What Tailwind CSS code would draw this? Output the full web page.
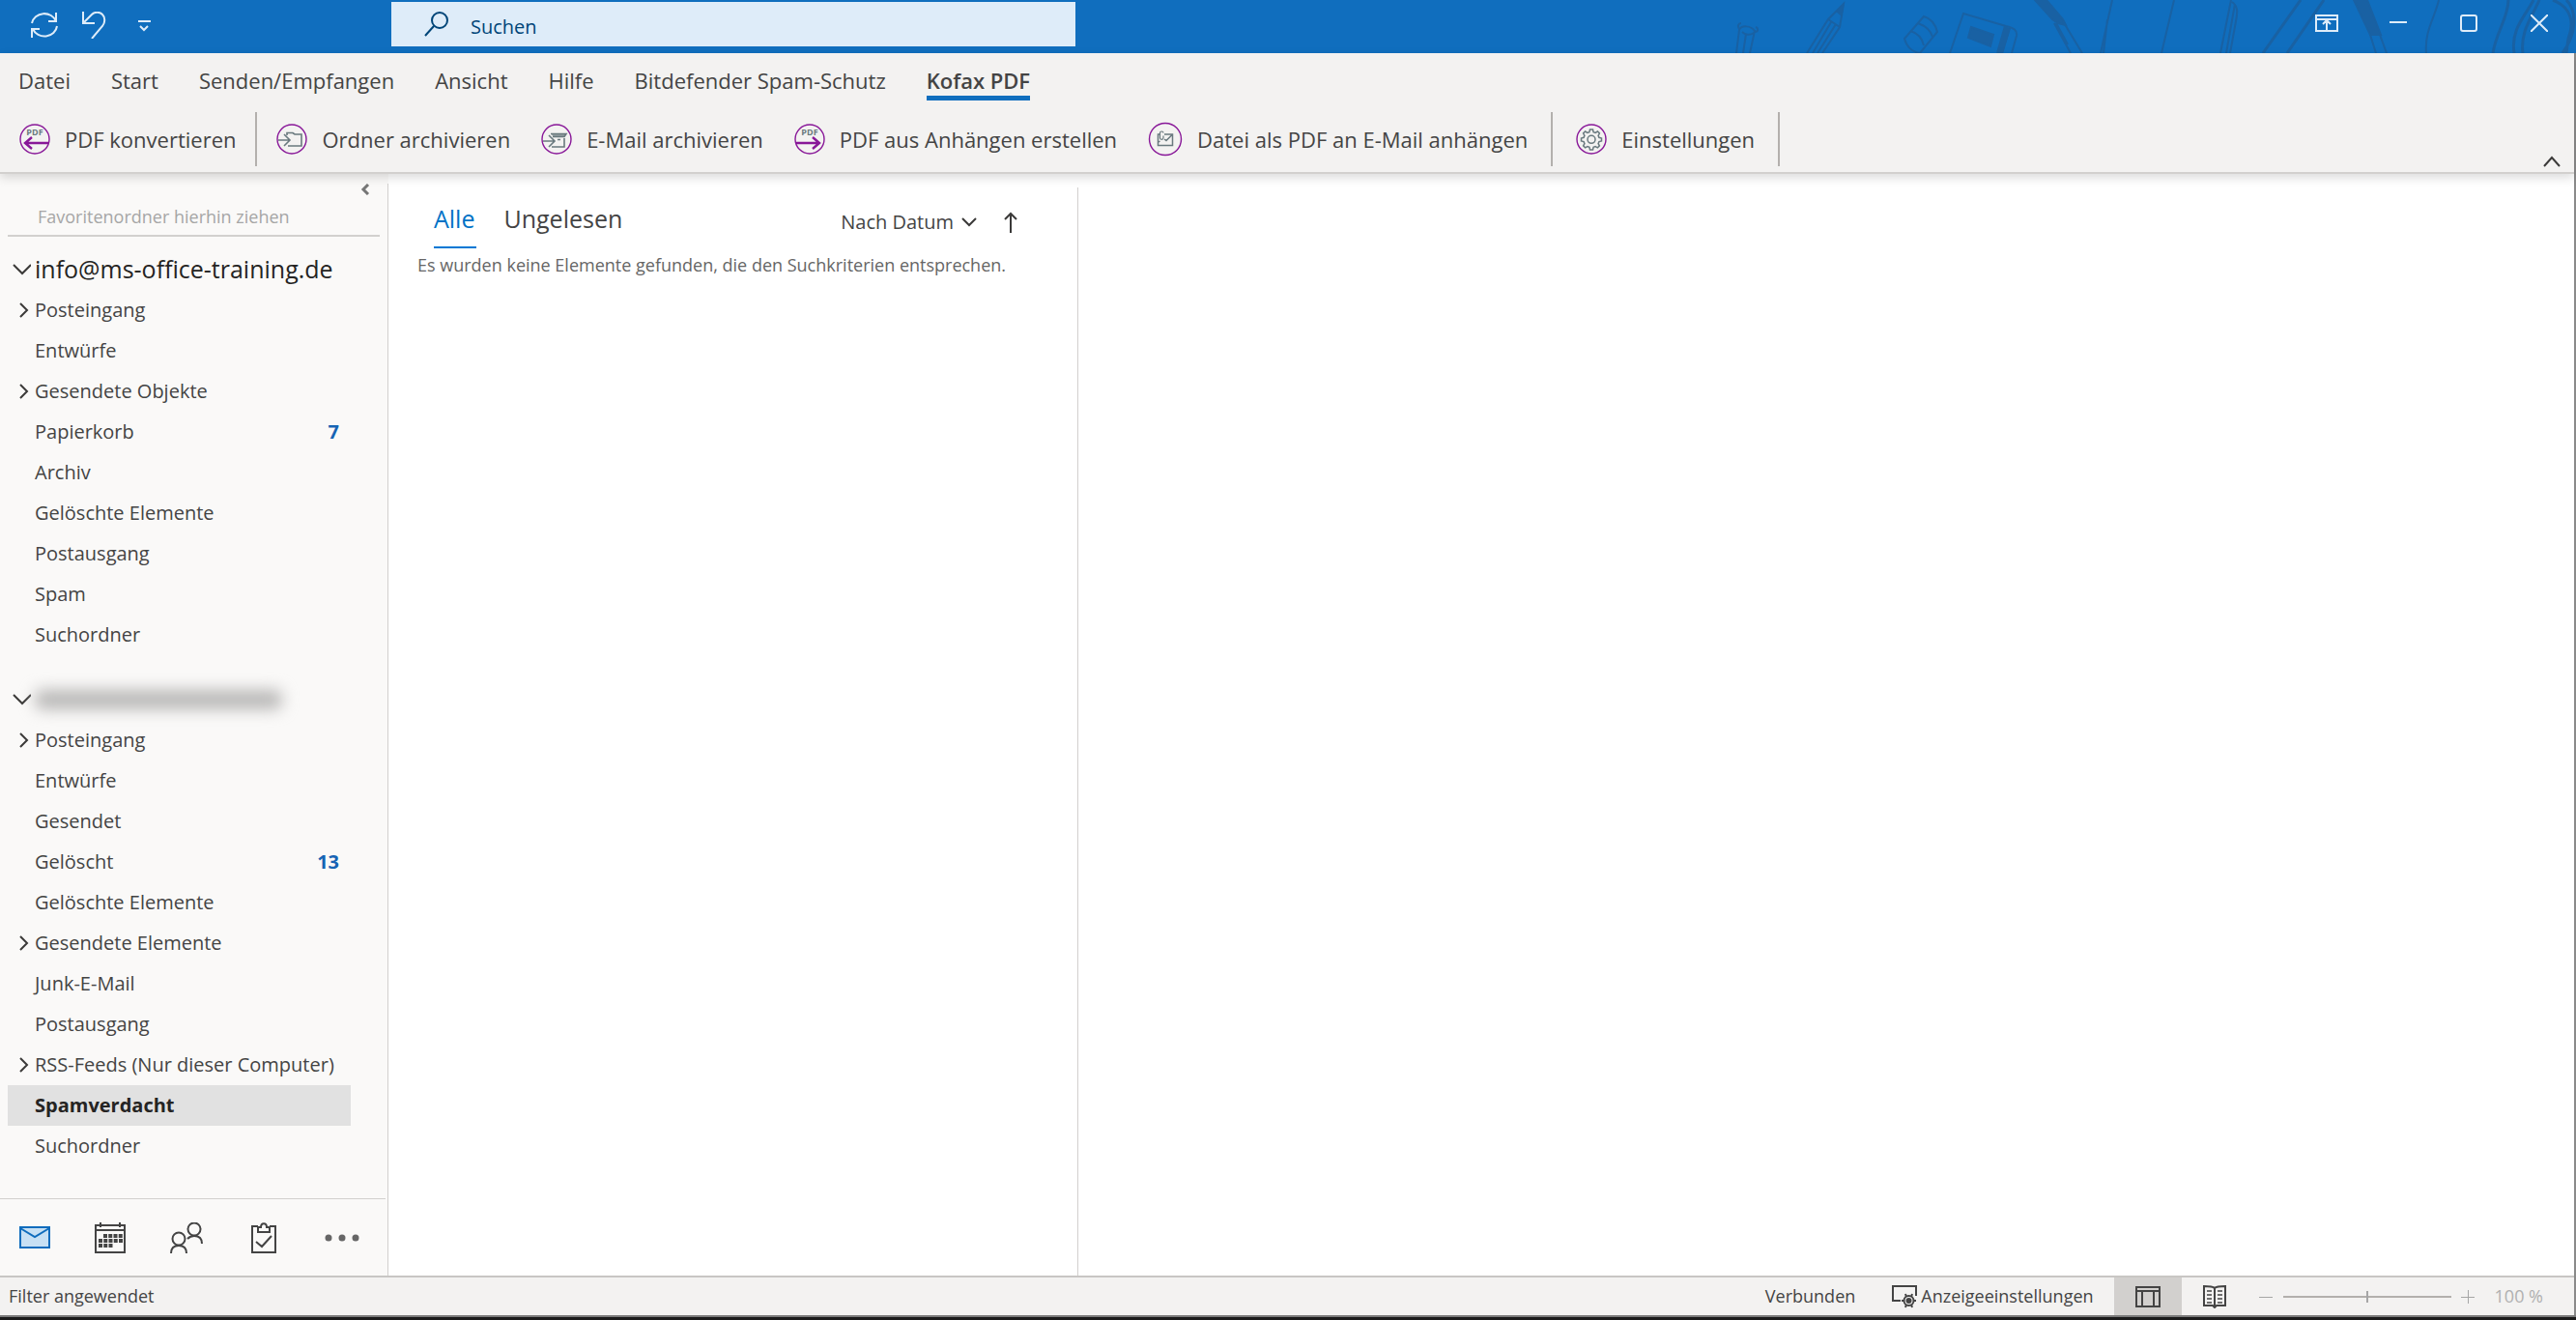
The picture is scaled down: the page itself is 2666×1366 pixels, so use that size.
<!DOCTYPE html>
<html lang="de">
<head>
  <meta charset="UTF-8">
  <meta name="viewport" content="width=device-width, initial-scale=1.0">
  <title>Spamverdacht - Outlook</title>
  <script src="https://cdn.jsdelivr.net/npm/@tailwindcss/browser@4"></script>
</head>
<body class="bg-white text-[#444] font-['Open_Sans','Noto_Sans',sans-serif] antialiased">
  <div class="min-h-screen flex flex-col">

    <!-- Title bar -->
    <header class="relative h-[55px] shrink-0 bg-[#106ebe] text-[#deecf9] flex items-start overflow-hidden">
      <svg class="absolute right-0 top-0 w-[886px] h-[55px]" viewBox="0 0 886 55" fill="none" stroke="#1961a3" stroke-width="2">
        <path d="M17 55l3-24c2-5 12-5 16 1l-5 23M24 55l3-20M20 30c-2-3-1-6 2-6M36 33c4 0 4-4 1-5M23 33c3 3 8 4 12 1"/>
        <path d="M90 55l22-35 16-16-4 24-18 27M96 55l19-32M101 55l19-30M112 20l12 8"/>
        <path d="M120 12l9-9-3 14z" fill="#1961a3" stroke="none"/>
        <path d="M191 40l20-23c7 2 12 8 14 16l-18 22c-8-1-14-7-16-15zM197 32c7 2 12 6 14 15M205 24c8 3 13 7 15 14"/>
        <path d="M238 55l14-41 44 13c8 2 12 4 11 10l-5 18M300 28l-8 27"/>
        <path d="M296 27l-8 28M299 29l-8 26" stroke-width="4"/>
        <path d="M260 28l23 8-3 12-23-9z" fill="#1961a3"/>
        <path d="M326 0h12l17 20 3 6-8-2-6-4z" fill="#1961a3"/>
        <path d="M348 24l12 22M355 22l20 33M346 24l17 31"/>
        <path d="M406 0l-12 55M401 20l-4 35M470 0l-13 55"/>
        <path d="M529 0l-11 55M533 4l-9 51M530 2c6 4 6 10 4 20l-6 33"/>
        <path d="M601 0l-39 55M625 0l-38 55" stroke-width="3"/>
        <path d="M656 0h14l14 36-11 0z" fill="#1961a3"/>
        <path d="M673 36l6 19M683 36l7 19M744 0c-4 18-15 32-13 55"/>
        <path d="M816 0c0 18-13 34-16 55M842 0c-8 16-24 30-20 55M848 0c-7 17-20 32-17 55M876 0c12 12 10 36-4 55M862 0c20 8 22 24 16 40l-2 15" stroke-width="3"/>
      </svg>

      <div class="flex items-center gap-[22px] pl-8 h-[52px] w-[405px]">
        <button aria-label="Alle Ordner senden/empfangen">
          <svg class="w-7 h-7" viewBox="0 0 28 28" fill="none" stroke="currentColor" stroke-width="2">
            <path d="M1 12a13 12 0 0 1 25-2M26 1v9h-8M27 15a13 12 0 0 1-25 3M1 27v-9h8"/>
          </svg>
        </button>
        <button aria-label="Rückgängig">
          <svg class="w-7 h-7" viewBox="0 0 28 28" fill="none" stroke="currentColor" stroke-width="2">
            <path d="M4 0v12h12M4 12L13 3c3-3 8-3 11 0s3 8 0 12L13 28"/>
          </svg>
        </button>
        <button aria-label="Symbolleiste anpassen" class="ml-[10px]">
          <svg class="w-4 h-4" viewBox="0 0 16 16" fill="none" stroke="currentColor" stroke-width="2">
            <path d="M1 4h13M3 9l4 4 4-4"/>
          </svg>
        </button>
      </div>

      <label class="relative mt-[2px] h-[46px] w-[708px] bg-[#deecf9] text-[#004578] flex items-center pl-[34px] gap-[22px]">
        <svg class="w-[26px] h-[26px] shrink-0" viewBox="0 0 26 26" fill="none" stroke="currentColor" stroke-width="2">
          <circle cx="16" cy="9" r="8"/><path d="M10 15L1 25"/>
        </svg>
        <input type="text" aria-label="Suchen" placeholder="Suchen" class="flex-1 h-full pt-1 text-[20px] bg-transparent outline-none placeholder:text-[#004578]">
      </label>

      <div class="relative ml-auto flex items-center h-12 pr-[29px] gap-[53px]">
        <button aria-label="Menüband-Anzeigeoptionen">
          <svg class="w-6 h-[18px]" viewBox="0 0 24 18" fill="none" stroke="currentColor" stroke-width="2">
            <path d="M1 1h22v16H1zM1 5h22M12 16V7M8 10l4-4 4 4"/>
          </svg>
        </button>
        <button aria-label="Minimieren">
          <svg class="w-[18px] h-[18px]" viewBox="0 0 18 18" stroke="currentColor" stroke-width="2"><path d="M0 8h18"/></svg>
        </button>
        <button aria-label="Maximieren">
          <svg class="w-[22px] h-[18px]" viewBox="0 0 22 18" fill="none" stroke="currentColor" stroke-width="2"><rect x="3" y="1" width="16" height="16" rx="2"/></svg>
        </button>
        <button aria-label="Schließen">
          <svg class="w-[18px] h-[18px]" viewBox="0 0 18 18" stroke="currentColor" stroke-width="2"><path d="M0 0l18 18M18 0L0 18"/></svg>
        </button>
      </div>
    </header>

    <div class="flex-1 flex flex-col border-r-2 border-[#8a8a8a]">
      <!-- Ribbon -->
      <div class="relative z-10 h-[125px] shrink-0 bg-[#f3f2f1] border-b-2 border-[#d2d0ce] shadow-[0_4px_10px_rgba(0,0,0,0.14)]">
        <nav class="flex items-start pl-[19px] pt-3 gap-[42px] text-[22px] leading-8">
          <button>Datei</button>
          <button>Start</button>
          <button>Senden/Empfangen</button>
          <button>Ansicht</button>
          <button>Hilfe</button>
          <button>Bitdefender Spam-Schutz</button>
          <button class="font-semibold border-b-[5px] border-[#106ebe]">Kofax PDF</button>
        </nav>

        <div class="flex items-center h-14 mt-3 pl-5 text-[22px]">
          <button class="flex items-center gap-[15px]">
            <svg class="w-8 h-8" viewBox="0 0 32 32" fill="none">
              <circle cx="16" cy="16" r="15" stroke="#881798" stroke-width="1.4"/>
              <text x="16" y="12" text-anchor="middle" font-size="9" font-weight="700" fill="#69797e">PDF</text>
              <path d="M30 20H6M13 14l-7 6 7 6" stroke="#881798" stroke-width="2.4"/>
            </svg>
            PDF konvertieren
          </button>
          <div class="w-[2px] h-14 bg-[#b3b0ad] mx-5"></div>
          <button class="flex items-center gap-[15px]">
            <svg class="w-8 h-8" viewBox="0 0 32 32" fill="none">
              <circle cx="16" cy="16" r="15" stroke="#881798" stroke-width="1.4"/>
              <path d="M2 17h11M8 11l6 6-6 6M11 12V9.500h6l2 1.500h7V23H12" stroke="#69797e" stroke-width="1.600"/>
            </svg>
            Ordner archivieren
          </button>
          <button class="flex items-center gap-[15px] ml-8">
            <svg class="w-8 h-8" viewBox="0 0 32 32" fill="none">
              <circle cx="16" cy="16" r="15" stroke="#881798" stroke-width="1.4"/>
              <path d="M2 18h11M8 12l6 6-6 6M10 10.500h16l-2 3H12M24 15v9H11M17 16.500h3" stroke="#69797e" stroke-width="1.600"/>
              <path d="M10 10h16l-2 4H13z" fill="#69797e" fill-opacity=".7"/>
            </svg>
            E-Mail archivieren
          </button>
          <button class="flex items-center gap-[15px] ml-8">
            <svg class="w-8 h-8" viewBox="0 0 32 32" fill="none">
              <circle cx="16" cy="16" r="15" stroke="#881798" stroke-width="1.4"/>
              <text x="16" y="12" text-anchor="middle" font-size="9" font-weight="700" fill="#69797e">PDF</text>
              <path d="M2 20h24M19 14l7 6-7 6" stroke="#881798" stroke-width="2.4"/>
            </svg>
            PDF aus Anhängen erstellen
          </button>
          <button class="flex items-center gap-[15px] ml-8">
            <svg class="w-9 h-9" viewBox="0 0 36 36" fill="none">
              <circle cx="18" cy="18" r="16.500" stroke="#881798" stroke-width="1.400"/>
              <path d="M12 13h-1.500v11.500h15v-11.500H17M11 21l1.500-1M17 18l2 1.500 6-6" stroke="#69797e" stroke-width="1.500"/>
              <path d="M16 11.500c0-2-3.500-2-3.500 0v5c0 2.500 3.500 2.500 3.500 0v-2" stroke="#69797e" stroke-width="1.200"/>
            </svg>
            Datei als PDF an E-Mail anhängen
          </button>
          <div class="w-[2px] h-14 bg-[#b3b0ad] mx-6"></div>
          <button class="flex items-center gap-[15px]">
            <svg class="w-8 h-8" viewBox="0 0 32 32" fill="none">
              <circle cx="16" cy="16" r="15" stroke="#881798" stroke-width="1.4"/>
              <path d="M14.500 6h3l.6 2.600 2 .8 2.300-1.400 2 2-1.300 2.300.8 2L26.500 15v3l-2.600.6-.8 2 1.300 2.300-2 2-2.300-1.300-2 .8-.6 2.600h-3l-.6-2.600-2-.8-2.300 1.300-2-2 1.300-2.300-.8-2L5.500 18v-3l2.600-.7.8-2L7.600 10l2-2 2.300 1.400 2-.8z" stroke="#69797e" stroke-width="1.500"/>
              <circle cx="16" cy="16.300" r="4" stroke="#69797e" stroke-width="1.500"/>
            </svg>
            Einstellungen
          </button>
          <div class="w-[2px] h-14 bg-[#b3b0ad] ml-6"></div>
          <button aria-label="Menüband reduzieren" class="ml-auto mr-[14px] mt-[46px]">
            <svg class="w-[18px] h-3" viewBox="0 0 18 12" fill="none" stroke="#3b3a39" stroke-width="2"><path d="M1 11l8-9 8 9"/></svg>
          </button>
        </div>
      </div>

      <div class="flex-1 flex">
        <!-- Folder pane -->
        <aside class="w-[402px] shrink-0 bg-[#faf9f8] pt-[10px] flex flex-col text-[20px]">
          <div class="flex-1 flex flex-col border-r border-[#d2d0ce]">
            <div class="h-[22px] flex items-start justify-end pr-[18px]">
              <button aria-label="Ordnerbereich minimieren">
                <svg class="w-[10px] h-3" viewBox="0 0 10 12" fill="none" stroke="#767676" stroke-width="3"><path d="M8 1L3 6l5 5"/></svg>
              </button>
            </div>
            <div class="ml-2 mr-2 pl-[31px] h-[33px] border-b-2 border-[#d2d0ce] text-[18px] leading-6 text-[#a6a6a6]">Favoritenordner hierhin ziehen</div>

            <button class="mt-[13px] h-[42px] pl-3 flex items-center gap-1 text-[25px] text-[#252423]">
              <svg class="w-5 h-3" viewBox="0 0 20 12" fill="none" stroke="#3b3a39" stroke-width="2"><path d="M2 1l9 9 9-9"/></svg>
              info@ms-office-training.de
            </button>
            <ul class="pl-2 pr-[38px]">
              <li><button class="w-full h-[42px] flex items-center"><svg class="w-7 h-4" viewBox="0 0 28 16" fill="none" stroke="#3b3a39" stroke-width="2"><path d="M13 1l7 7-7 7"/></svg>Posteingang</button></li>
              <li><button class="w-full h-[42px] flex items-center pl-7">Entwürfe</button></li>
              <li><button class="w-full h-[42px] flex items-center"><svg class="w-7 h-4" viewBox="0 0 28 16" fill="none" stroke="#3b3a39" stroke-width="2"><path d="M13 1l7 7-7 7"/></svg>Gesendete Objekte</button></li>
              <li><button class="w-full h-[42px] flex items-center pl-7 pr-3">Papierkorb <span class="ml-auto font-bold text-[#1664b4]">7</span></button></li>
              <li><button class="w-full h-[42px] flex items-center pl-7">Archiv</button></li>
              <li><button class="w-full h-[42px] flex items-center pl-7">Gelöschte Elemente</button></li>
              <li><button class="w-full h-[42px] flex items-center pl-7">Postausgang</button></li>
              <li><button class="w-full h-[42px] flex items-center pl-7">Spam</button></li>
              <li><button class="w-full h-[42px] flex items-center pl-7">Suchordner</button></li>
            </ul>

            <!-- Second account, name redacted -->
            <button class="mt-[25px] h-[42px] pl-3 flex items-center gap-1" aria-label="Zweites Konto">
              <svg class="w-5 h-3" viewBox="0 0 20 12" fill="none" stroke="#3b3a39" stroke-width="2"><path d="M2 1l9 9 9-9"/></svg>
              <span class="w-[256px] h-5 bg-[#b8b7b6] rounded-lg blur-[8px]"></span>
            </button>
            <ul class="pl-2 pr-[38px]">
              <li><button class="w-full h-[42px] flex items-center"><svg class="w-7 h-4" viewBox="0 0 28 16" fill="none" stroke="#3b3a39" stroke-width="2"><path d="M13 1l7 7-7 7"/></svg>Posteingang</button></li>
              <li><button class="w-full h-[42px] flex items-center pl-7">Entwürfe</button></li>
              <li><button class="w-full h-[42px] flex items-center pl-7">Gesendet</button></li>
              <li><button class="w-full h-[42px] flex items-center pl-7 pr-3">Gelöscht <span class="ml-auto font-bold text-[#1664b4]">13</span></button></li>
              <li><button class="w-full h-[42px] flex items-center pl-7">Gelöschte Elemente</button></li>
              <li><button class="w-full h-[42px] flex items-center"><svg class="w-7 h-4" viewBox="0 0 28 16" fill="none" stroke="#3b3a39" stroke-width="2"><path d="M13 1l7 7-7 7"/></svg>Gesendete Elemente</button></li>
              <li><button class="w-full h-[42px] flex items-center pl-7">Junk-E-Mail</button></li>
              <li><button class="w-full h-[42px] flex items-center pl-7">Postausgang</button></li>
              <li><button class="w-full h-[42px] flex items-center whitespace-nowrap"><svg class="w-7 h-4 shrink-0" viewBox="0 0 28 16" fill="none" stroke="#3b3a39" stroke-width="2"><path d="M13 1l7 7-7 7"/></svg>RSS-Feeds (Nur dieser Computer)</button></li>
              <li><button class="w-full h-[42px] flex items-center pl-7 bg-[#e1e1e1] font-bold text-[#252423]">Spamverdacht</button></li>
              <li><button class="w-full h-[42px] flex items-center pl-7">Suchordner</button></li>
            </ul>

            <!-- Module switcher -->
            <nav class="mt-auto h-20 mr-[2px] border-t border-[#d2d0ce] flex items-center pl-5 gap-[46px]">
              <button aria-label="E-Mail">
                <svg class="w-8 h-6" viewBox="0 0 32 24" fill="#c7e0f4" stroke="#0f6cbd" stroke-width="2"><path d="M1 1h30v21H1z"/><path d="M1 2l15 9 15-9"/></svg>
              </button>
              <button aria-label="Kalender">
                <svg class="w-8 h-8" viewBox="0 0 32 32" fill="none" stroke="#444" stroke-width="2">
                  <path d="M1 3h30v28H1zM1 8h30M6 0v5M26 0v5"/>
                  <path d="M9 14h20M4 19h25M4 24h15" stroke-width="4" stroke-dasharray="4 1.250"/>
                </svg>
              </button>
              <button aria-label="Personen">
                <svg class="w-[34px] h-8" viewBox="0 0 34 32" fill="none" stroke="#444" stroke-width="2">
                  <circle cx="9" cy="17" r="6.500"/><path d="M1 32c0-5 3-8 8-8s8 3 8 8"/>
                  <circle cx="25" cy="7" r="6.500"/><path d="M18 17c2-2 4-3 7-3 5 0 8 3 8 8"/>
                </svg>
              </button>
              <button aria-label="Aufgaben" class="ml-1">
                <svg class="w-[26px] h-8" viewBox="0 0 26 32" fill="none" stroke="#444" stroke-width="2">
                  <path d="M7 4H1v27h24V4h-6M7 10V5h3c0-5 6-5 6 0h3v5zM5 20l6 5 10-11"/>
                </svg>
              </button>
              <button aria-label="Weitere Optionen">
                <svg class="w-10 h-2" viewBox="0 0 40 8" fill="#666"><circle cx="8" cy="4" r="3.500"/><circle cx="22" cy="4" r="3.500"/><circle cx="36" cy="4" r="3.500"/></svg>
              </button>
            </nav>
          </div>
        </aside>

        <!-- Message list -->
        <section class="w-[714px] shrink-0 mt-[14px] pt-[14px] border-r border-[#d2d0ce]">
          <div class="flex items-start pl-[47px] pr-[62px]">
            <button class="h-[49px] pr-[2px] border-b-2 border-[#0078d4] text-[#0072c6] text-[25px] leading-[36px] flex items-start">Alle</button>
            <button class="ml-7 text-[25px] leading-[36px]">Ungelesen</button>
            <button class="ml-auto flex items-center gap-2 text-[20px] leading-[44px]">
              Nach Datum
              <svg class="w-4 h-[10px]" viewBox="0 0 16 10" fill="none" stroke="#3b3a39" stroke-width="2"><path d="M1 1l7 7 7-7"/></svg>
            </button>
            <button aria-label="Aufsteigend sortieren" class="ml-7 pt-[11px]">
              <svg class="w-[14px] h-[22px]" viewBox="0 0 14 22" fill="none" stroke="#3b3a39" stroke-width="2"><path d="M7 22V2M1 8l6-6 6 6"/></svg>
            </button>
          </div>
          <p class="pl-[30px] mt-[3px] text-[18px] leading-7 text-[#666]">Es wurden keine Elemente gefunden, die den Suchkriterien entsprechen.</p>
        </section>

        <!-- Reading pane -->
        <main class="flex-1"></main>
      </div>

      <!-- Status bar -->
      <footer class="h-[41px] shrink-0 bg-[#f3f2f1] border-t-2 border-[#c8c6c4] flex items-center pl-[9px] text-[18px]">
        <span>Filter angewendet</span>
        <span class="ml-auto">Verbunden</span>
        <button class="ml-[38px] flex items-center gap-1">
          <svg class="w-[26px] h-6" viewBox="0 0 26 24" fill="none" stroke="#444" stroke-width="2">
            <path d="M9 16H1V1h24v10"/>
            <circle cx="17.500" cy="16" r="5" stroke-width="2"/><circle cx="17.500" cy="16" r="2" fill="#444"/>
            <path d="M14 9l1 3M21 9l-1 3M14 23l1-3M21 23l-1-3M10 16h3M22 16h3"/>
          </svg>
          Anzeigeeinstellungen
        </button>
        <button aria-label="Normal" class="ml-[21px] w-[70px] self-stretch bg-[#d2d0ce] flex items-center justify-center">
          <svg class="w-[26px] h-[22px]" viewBox="0 0 26 22" fill="none" stroke="#444" stroke-width="2"><path d="M1 1h24v20H1zM1 5h24M7 5v16M19 5v16"/></svg>
        </button>
        <button aria-label="Lesen" class="ml-[22px]">
          <svg class="w-6 h-6" viewBox="0 0 24 24" fill="none" stroke="#444" stroke-width="2">
            <path d="M12 3c-2-2-5-2-11-2v20h9l2 2 2-2h9V1c-6 0-9 0-11 2zM12 3v19"/>
            <path d="M4 6h5M4 10h5M4 14h5M4 18h5M15 6h5M15 10h5M15 14h5M15 18h5" stroke-width="1.500"/>
          </svg>
        </button>
        <button aria-label="Verkleinern" class="ml-[34px]">
          <svg class="w-[14px] h-[14px]" viewBox="0 0 14 14" stroke="#a6a6a6"><path d="M0 7.500h14"/></svg>
        </button>
        <input type="range" min="10" max="190" value="100" aria-label="Zoom" class="ml-[11px] w-[174px] h-3 appearance-none bg-transparent bg-[linear-gradient(#b3b0ad,#b3b0ad)] bg-[length:100%_2px] bg-center bg-no-repeat [&::-webkit-slider-thumb]:appearance-none [&::-webkit-slider-thumb]:w-[2px] [&::-webkit-slider-thumb]:h-3 [&::-webkit-slider-thumb]:bg-[#a6a6a6]">
        <button aria-label="Vergrößern" class="ml-[10px]">
          <svg class="w-[14px] h-[14px]" viewBox="0 0 14 14" stroke="#a6a6a6"><path d="M0 7.500h14M7.500 0v14"/></svg>
        </button>
        <span class="ml-[21px] mr-8 text-[#b0b0b0]">100 %</span>
      </footer>
    </div>
    <div class="h-[5px] shrink-0 bg-[#1b1b1b] border-t-2 border-[#7a7a7a]"></div>
  </div>
</body>
</html>
